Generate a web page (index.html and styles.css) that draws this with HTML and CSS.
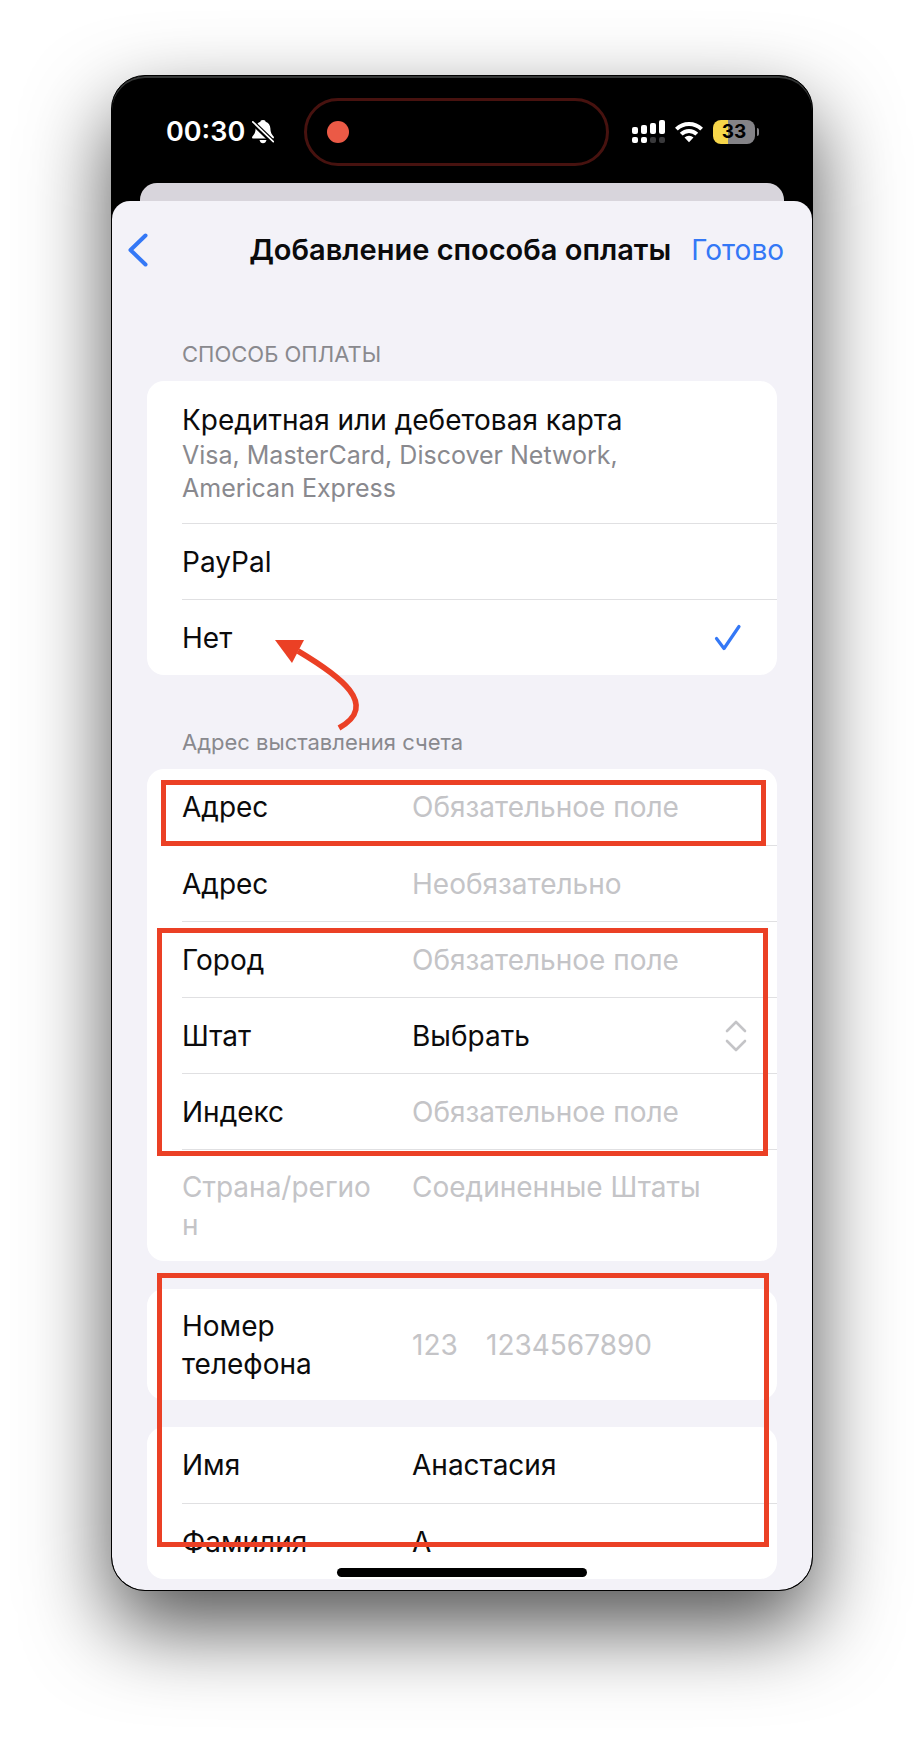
FILE: index.html
```html
<!DOCTYPE html>
<html lang="ru">
<head>
<meta charset="utf-8">
<meta name="viewport" content="width=device-width, initial-scale=1">
<title>Добавление способа оплаты</title>
<link rel="stylesheet" href="styles.css">
</head>
<body>
<main class="phone">
  <div class="status">
    <div class="status-left">
      <time>00:30</time>
      <svg class="bell" viewBox="0 0 22 24" width="22" height="24" aria-hidden="true">
        <path fill="#fff" d="M11 0c-2 0-2.600 1-2.600 1.800C5.300 2.800 3.800 5.200 3.600 8.500 3.500 13 2 14.500.4 16.500c-.7 1-.3 2 .9 2h19.400c1.200 0 1.600-1 .9-2-1.600-2-3.100-3.500-3.200-8-.2-3.300-1.700-5.700-4.800-6.700C13.600 1 13 0 11 0zM7.500 20h7c-.4 2-1.800 3.300-3.500 3.300S7.900 22 7.500 20z"/>
        <path d="M0 1.800 21.500 22.600" stroke="#000" stroke-width="5"/>
        <path d="M.8 1.800 21.300 21.600" stroke="#fff" stroke-width="1.700" stroke-linecap="round"/>
      </svg>
    </div>
    <div class="island"><span class="rec"></span></div>
    <div class="status-right">
      <svg viewBox="0 0 33 24" width="33" height="24" aria-hidden="true">
        <g fill="#fff">
          <rect x="0" y="7" width="6" height="7" rx="2"/><rect x="9" y="5" width="6" height="9" rx="2"/>
          <rect x="18" y="3" width="6" height="11" rx="2"/><rect x="27" y="0" width="6" height="14" rx="2"/>
          <rect x="0" y="17" width="6" height="6" rx="2"/><rect x="9" y="17" width="6" height="6" rx="2"/>
        </g>
        <g fill="#39393b"><rect x="18" y="17" width="6" height="6" rx="2"/><rect x="27" y="17" width="6" height="6" rx="2"/></g>
      </svg>
      <svg viewBox="0 0 28 22" width="28" height="22" aria-hidden="true">
        <g fill="none" stroke="#fff" stroke-width="4">
          <path d="M1.400 8.200a17.900 17.900 0 0 1 25.200 0"/>
          <path d="M6.200 13.200a11 11 0 0 1 15.600 0"/>
        </g>
        <path fill="#fff" d="M9.500 16.600a6.400 6.400 0 0 1 9 0L14 21.300z"/>
      </svg>
      <div class="battery"><span>33</span></div>
    </div>
  </div>
  <div class="behind"></div>
  <section class="sheet">
    <header class="nav">
      <button class="back" type="button" aria-label="Назад">
        <svg viewBox="0 0 20 34" width="20" height="34" aria-hidden="true"><path d="M17.500 2.500 2.500 17l15 14.500" fill="none" stroke="#3478f6" stroke-width="4" stroke-linecap="round" stroke-linejoin="round"/></svg>
      </button>
      <h1>Добавление способа оплаты</h1>
      <button class="done" type="submit" form="payment">Готово</button>
    </header>
    <form id="payment">
      <h2>СПОСОБ ОПЛАТЫ</h2>
      <div class="card methods">
        <label class="row option tall">
          <input type="radio" name="method">
          <span>Кредитная или дебетовая карта<small>Visa, MasterCard, Discover Network, American Express</small></span>
        </label>
        <label class="row option"><input type="radio" name="method"><span>PayPal</span></label>
        <label class="row option">
          <input type="radio" name="method" checked><span>Нет</span>
          <svg class="check" viewBox="0 0 28 28" width="28" height="28" aria-hidden="true"><path d="M2.500 14.500 10 24.500 25 2.500" fill="none" stroke="#3478f6" stroke-width="3.200" stroke-linecap="round" stroke-linejoin="round"/></svg>
        </label>
        <svg class="arrow" viewBox="0 0 90 100" width="90" height="100" aria-hidden="true">
          <path d="M26 15C68 40 108 69 67 92" fill="none" stroke="#eb4025" stroke-width="5.600"/>
          <path d="M3 4h29L20 27z" fill="#eb4025"/>
        </svg>
      </div>

      <h2>Адрес выставления счета</h2>
      <div class="card">
        <div class="row field">
          <label for="addr1">Адрес</label><input id="addr1" type="text" placeholder="Обязательное поле">
          <span class="mark mark-address"></span>
        </div>
        <div class="row field">
          <label for="addr2">Адрес</label><input id="addr2" type="text" placeholder="Необязательно">
        </div>
        <div class="marked">
          <div class="row field">
            <label for="city">Город</label><input id="city" type="text" placeholder="Обязательное поле">
          </div>
          <div class="row field">
            <label for="state">Штат</label>
            <span class="picker">
              <select id="state"><option>Выбрать</option></select>
              <svg viewBox="0 0 22 32" width="22" height="32" aria-hidden="true"><path d="M2 11 11 2l9 9M2 21l9 9 9-9" fill="none" stroke="#c4c4c7" stroke-width="2.600" stroke-linecap="round" stroke-linejoin="round"/></svg>
            </span>
          </div>
          <div class="row field">
            <label for="zip">Индекс</label><input id="zip" type="text" placeholder="Обязательное поле">
          </div>
          <span class="mark mark-city"></span>
        </div>
        <div class="row field two-line country">
          <label for="country">Страна/регион</label><input id="country" type="text" value="Соединенные Штаты" disabled>
        </div>
      </div>

      <div class="contact">
        <div class="card">
          <div class="row field two-line">
            <label for="phone">Номер телефона</label>
            <span class="phone-number">
              <input class="code" type="tel" placeholder="123" aria-label="Код">
              <input id="phone" type="tel" placeholder="1234567890">
            </span>
          </div>
        </div>
        <div class="card">
          <div class="row field"><label for="first">Имя</label><input id="first" type="text" value="Анастасия"></div>
          <div class="row field"><label for="last">Фамилия</label><input id="last" type="text" value="А"></div>
        </div>
        <span class="mark mark-contact"></span>
      </div>
    </form>
    <div class="home"></div>
  </section>
</main>
</body>
</html>
```
FILE: styles.css
```css
* { box-sizing: border-box; }

body {
  margin: 0;
  padding: 75px 111px 147px;
  background: #fff;
  color: #0b0b0c;
  font: 400 28px/38px Inter, "Noto Sans", sans-serif;
}

.phone {
  border: 1px solid #000;
  border-radius: 34px;
  background: #000;
  overflow: hidden;
  box-shadow: 0 36px 84px rgba(0, 0, 0, 0.68);
}

/* Status bar */
.status {
  display: flex;
  align-items: center;
  height: 107px;
  padding: 22px 0 17px;
  border-radius: 33px 33px 0 0;
  box-shadow: inset 0 2px 0 #343636;
  color: #fff;
}
.status-left {
  display: flex;
  align-items: center;
  gap: 7px;
  flex: 0 0 192px;
  padding-left: 54px;
  font-size: 27px;
  font-weight: 600;
}
.island {
  display: flex;
  align-items: center;
  flex: 0 0 305px;
  height: 68px;
  padding-left: 20px;
  border: 3px solid #47120f;
  border-radius: 34px;
}
.rec {
  width: 22px;
  height: 22px;
  border-radius: 50%;
  background: #eb5a46;
}
.status-right {
  display: flex;
  align-items: center;
  gap: 10px;
  padding-left: 23px;
}
.battery {
  position: relative;
  width: 42px;
  height: 24px;
  border-radius: 8px;
  background: linear-gradient(90deg, #f7d64a 35%, #848387 35%);
  color: #000;
  font-size: 19px;
  font-weight: 700;
  line-height: 24px;
  text-align: center;
}
.battery::after {
  content: "";
  position: absolute;
  top: 8px;
  right: -4px;
  width: 2px;
  height: 8px;
  border-radius: 0 2px 2px 0;
  background: #848387;
}

/* Sheet */
.behind {
  height: 18px;
  margin: 0 28px;
  border-radius: 17px 17px 0 0;
  background: #d8d5dc;
}
.sheet {
  position: relative;
  padding-bottom: 11px;
  border-radius: 18px 18px 33px 33px;
  background: #f3f2f8;
}
.nav {
  display: flex;
  align-items: center;
  padding: 29px 28px 0 16px;
}
.nav h1 {
  flex: 1;
  margin: 0 20px 0 0;
  font-size: 29px;
  font-weight: 600;
  line-height: 40px;
  text-align: right;
  white-space: nowrap;
}
button {
  padding: 0;
  border: 0;
  background: none;
  color: #3478f6;
  font: inherit;
}
.back, .back svg { display: block; }

form { padding: 67px 35px 0; }
h2 {
  margin: 0 0 10px;
  padding-left: 35px;
  color: #89898e;
  font-size: 22px;
  font-weight: 400;
  line-height: 34px;
}
.card {
  position: relative;
  border-radius: 17px;
  background: #fff;
}
.methods { margin-bottom: 50px; }

.row {
  position: relative;
  display: flex;
  align-items: center;
  min-height: 76px;
  margin-left: 35px;
  padding: 18px 30px 18px 0;
}
.row + .row, .marked .row:first-child, .marked + .row { border-top: 1px solid #e0e0e2; }

.option { justify-content: space-between; }
.option input {
  position: absolute;
  opacity: 0;
}
.tall { align-items: flex-start; min-height: 142px; padding-top: 20px; }
small {
  display: block;
  max-width: 470px;
  color: #89898e;
  font-size: 25px;
  line-height: 33px;
}
.check { margin-right: 5px; }
.arrow {
  position: absolute;
  left: 125px;
  bottom: -61px;
}

.field label { flex: 0 0 200px; margin-right: 30px; }
.field input, .field select {
  flex: 1;
  min-width: 0;
  width: 100%;
  padding: 0;
  border: 0;
  outline: 0;
  background: none;
  color: inherit;
  font: inherit;
  appearance: none;
  opacity: 1;
}
.field input::placeholder { color: #c4c4c7; opacity: 1; }
.picker, .phone-number {
  display: flex;
  align-items: center;
  flex: 1;
}
.phone-number .code { flex: 0 0 74px; }

.marked { position: relative; }
.two-line { min-height: 111px; padding-top: 17px; padding-bottom: 17px; }
.country { align-items: flex-start; padding-top: 18px; color: #c4c4c7; }
.country label { word-break: break-all; }

.contact {
  position: relative;
  display: grid;
  gap: 27px;
  margin-top: 28px;
}

/* Red highlight frames */
.mark {
  position: absolute;
  border: 5px solid #eb4025;
  pointer-events: none;
}
.mark-address { inset: 11px 11px -1px -21px; z-index: 1; }
.mark-city { inset: 7px 9px -7px 10px; z-index: 1; }
.mark-contact { inset: -16px 8px 32px 10px; }

.home {
  position: absolute;
  bottom: 13px;
  left: 50%;
  width: 250px;
  height: 9px;
  margin-left: -125px;
  border-radius: 5px;
  background: #000;
}
```
